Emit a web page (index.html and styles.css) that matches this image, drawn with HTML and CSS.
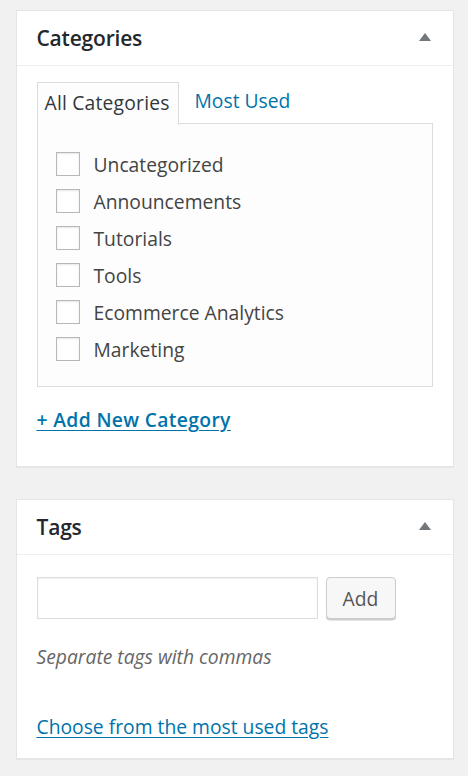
FILE: index.html
```html
<!DOCTYPE html>
<html>
<head>
<meta charset="utf-8">
<link rel="stylesheet" href="styles.css">
</head>
<body>
<div class="page">
  <section class="box">
    <header class="box-head">
      <h2 class="box-title">Categories</h2>
      <span class="toggle"></span>
    </header>
    <div class="box-body cats">
      <div class="tabs">
        <span class="tab active">All Categories</span>
        <span class="tab link">Most Used</span>
      </div>
      <div class="panel">
        <ul class="checklist">
          <li><span class="cb"></span><span>Uncategorized</span></li>
          <li><span class="cb"></span><span>Announcements</span></li>
          <li><span class="cb"></span><span>Tutorials</span></li>
          <li><span class="cb"></span><span>Tools</span></li>
          <li><span class="cb"></span><span>Ecommerce Analytics</span></li>
          <li><span class="cb"></span><span>Marketing</span></li>
        </ul>
      </div>
      <a class="add-new">+ Add New Category</a>
    </div>
  </section>
  <section class="box">
    <header class="box-head">
      <h2 class="box-title">Tags</h2>
      <span class="toggle"></span>
    </header>
    <div class="box-body tags">
      <div class="tag-row">
        <span class="input"></span>
        <span class="button">Add</span>
      </div>
      <p class="howto">Separate tags with commas</p>
      <a class="choose">Choose from the most used tags</a>
    </div>
  </section>
</div>
</body>
</html>
```
FILE: styles.css
```css
* { box-sizing: border-box; }
html, body { margin: 0; padding: 0; }
body {
  background: #f1f1f1;
  font-family: "Open Sans", "Noto Sans", sans-serif;
  color: #444;
  width: 468px;
  height: 776px;
  overflow: hidden;
}
.page {
  padding: 10px 14px 0 16px;
  display: flex;
  flex-direction: column;
  gap: 32px;
}
.box {
  background: #fff;
  border: 1.5px solid #e5e5e5;
  box-shadow: 0 1px 1px rgba(0,0,0,0.04);
}
.box-head {
  height: 55px;
  border-bottom: 1.5px solid #eee;
  display: flex;
  align-items: center;
  justify-content: space-between;
  padding: 0 22px 0 19.5px;
}
.box-title {
  margin: 0;
  font-size: 21px;
  font-weight: 600;
  color: #23282d;
  letter-spacing: -0.2px;
}
.toggle {
  width: 0;
  height: 0;
  border-left: 6px solid transparent;
  border-right: 6px solid transparent;
  border-bottom: 8px solid #72777c;
  margin-top: -2px;
}
.box-body { padding: 14px 20px 0 19.5px; }
.tabs { display: flex; align-items: flex-end; height: 43px; }
.tab {
  font-size: 19.3px;
  height: 43px;
  line-height: 39px;
  padding: 0 7px;
}
.tab.active {
  border: 1.5px solid #ddd;
  border-bottom: none;
  background: #fdfdfd;
  margin-bottom: -1.5px;
  position: relative;
  z-index: 1;
  width: 142px;
  color: #32373c;
  letter-spacing: 0.2px;
  white-space: nowrap;
}
.tab.link { color: #0073aa; padding-left: 16px; line-height: 42px; }
.panel {
  border: 1.5px solid #ddd;
  background: #fdfdfd;
  height: 264px;
  padding: 28px 18px 0;
}
.checklist { list-style: none; margin: 0; padding: 0; display: flex; flex-direction: column; gap: 13px; }
.checklist li { display: flex; align-items: center; height: 24px; font-size: 19.3px; color: #444; }
.cb {
  width: 24px; height: 24px;
  border: 1.5px solid #b4b9be;
  background: #fff;
  box-shadow: inset 0 1px 2px rgba(0,0,0,0.1);
  margin-right: 14px;
  flex: none;
}
.add-new {
  display: block;
  margin: 19px 0 0;
  font-size: 19.3px;
  font-weight: 600;
  letter-spacing: 0.35px;
  color: #0073aa;
  text-decoration: underline;
  text-underline-offset: 3px;
  padding-bottom: 33px;
}
.tags { padding-top: 22px; }
.tag-row { display: flex; gap: 8px; align-items: flex-start; }
.input {
  width: 281px;
  height: 42px;
  border: 1.5px solid #ddd;
  box-shadow: inset 0 1px 2px rgba(0,0,0,0.07);
  background: #fff;
}
.button {
  width: 70px;
  height: 42px;
  border: 1.5px solid #ccc;
  border-radius: 4px;
  background: #f7f7f7;
  box-shadow: 0 1.5px 0 #ccc;
  color: #555;
  font-size: 19.3px;
  display: flex; align-items: center; justify-content: center;
}
.howto {
  margin: 24px 0 0;
  font-style: italic;
  font-size: 19.3px;
  color: #666;
}
.choose {
  display: block;
  margin-top: 43px;
  font-size: 19.3px;
  color: #0073aa;
  text-decoration: underline;
  text-underline-offset: 3px;
  padding-bottom: 18px;
}
```
